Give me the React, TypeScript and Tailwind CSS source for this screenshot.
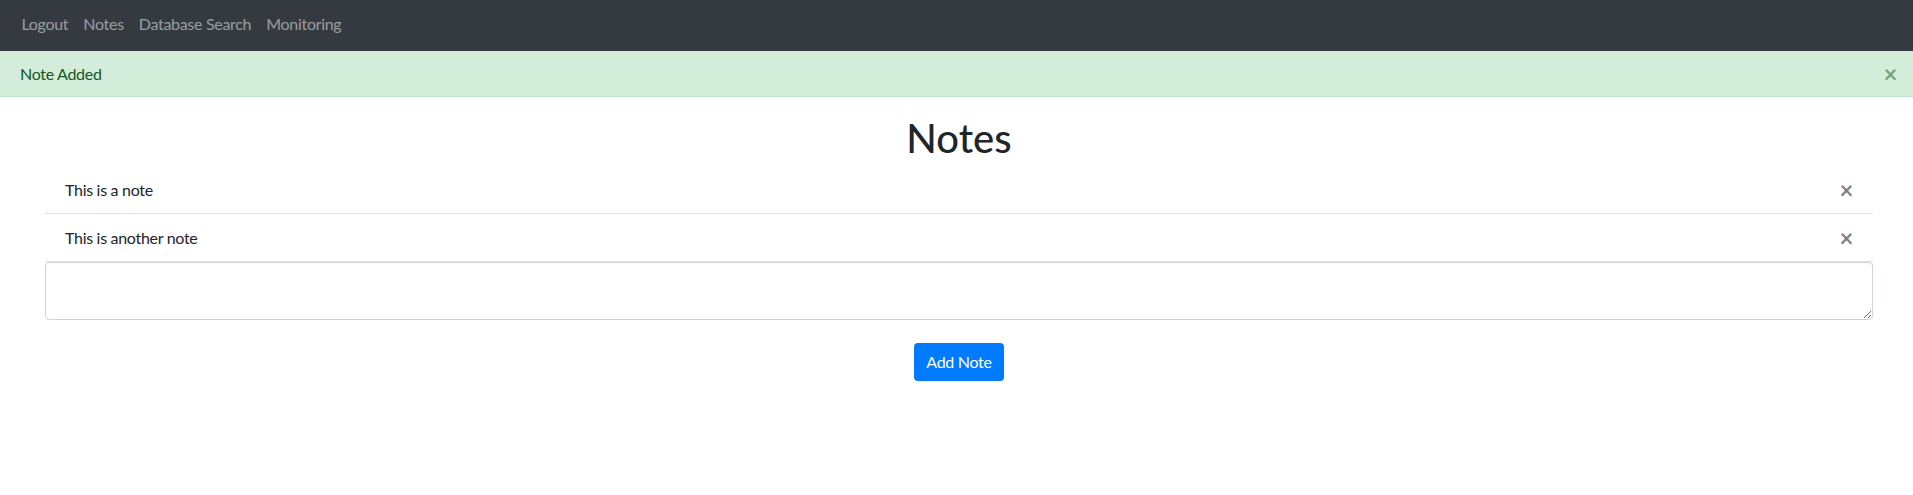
import { useState } from 'react';

const navLinks = ['Logout', 'Notes', 'Database Search', 'Monitoring'];

export default function App() {
  const [notes, setNotes] = useState<string[]>(['This is a note', 'This is another note']);
  const [draft, setDraft] = useState('');
  const [showAlert, setShowAlert] = useState(true);

  const handleAdd = () => {
    if (!draft.trim()) return;
    setNotes([...notes, draft.trim()]);
    setDraft('');
    setShowAlert(true);
  };

  const handleRemove = (index: number) => {
    setNotes(notes.filter((_, i) => i !== index));
  };

  return (
    <div className="min-h-screen bg-white text-[16px] tracking-[-0.3px] text-[#212529] font-['Lato','Roboto',sans-serif]">
      <nav className="h-[51px] bg-[#343a40] flex items-center pl-[14px] pb-[3px]">
        {navLinks.map((link) => (
          <a key={link} href="#" className="px-[7.5px] leading-6 text-white/50 hover:text-white/75">
            {link}
          </a>
        ))}
      </nav>

      {showAlert && (
        <div className="relative h-[46px] bg-[#d4edda] border-b border-[#c3e6cb] text-[#155724] flex items-center pl-5">
          Note Added
          <button
            onClick={() => setShowAlert(false)}
            className="absolute right-[16px] top-1/2 -translate-y-1/2 text-[24px] font-bold leading-none text-[#155724]/50"
          >
            ×
          </button>
        </div>
      )}

      <main className="pl-[45px] pr-[40px]">
        <h1 className="mt-[17px] text-center text-[40px] leading-[48px] font-medium tracking-normal">Notes</h1>

        <ul className="mt-[4px]">
          {notes.map((note, i) => (
            <li key={i} className="flex items-center justify-between px-5 py-[11.5px] leading-6 border-b border-[#dee2e6]">
              <span>{note}</span>
              <button
                onClick={() => handleRemove(i)}
                className="text-[24px] font-bold leading-none text-black/50 hover:text-black/75"
              >
                ×
              </button>
            </li>
          ))}
        </ul>

        <textarea
          value={draft}
          onChange={(e) => setDraft(e.target.value)}
          className="block w-full h-[58px] px-3 py-1.5 border border-[#ced4da] rounded-[4px] focus:outline-none focus:border-[#80bdff]"
        />

        <div className="flex justify-center mt-[23px]">
          <button
            onClick={handleAdd}
            className="h-[38px] px-3 rounded-[4px] bg-[#007bff] hover:bg-[#0069d9] text-white leading-6"
          >
            Add Note
          </button>
        </div>
      </main>
    </div>
  );
}
